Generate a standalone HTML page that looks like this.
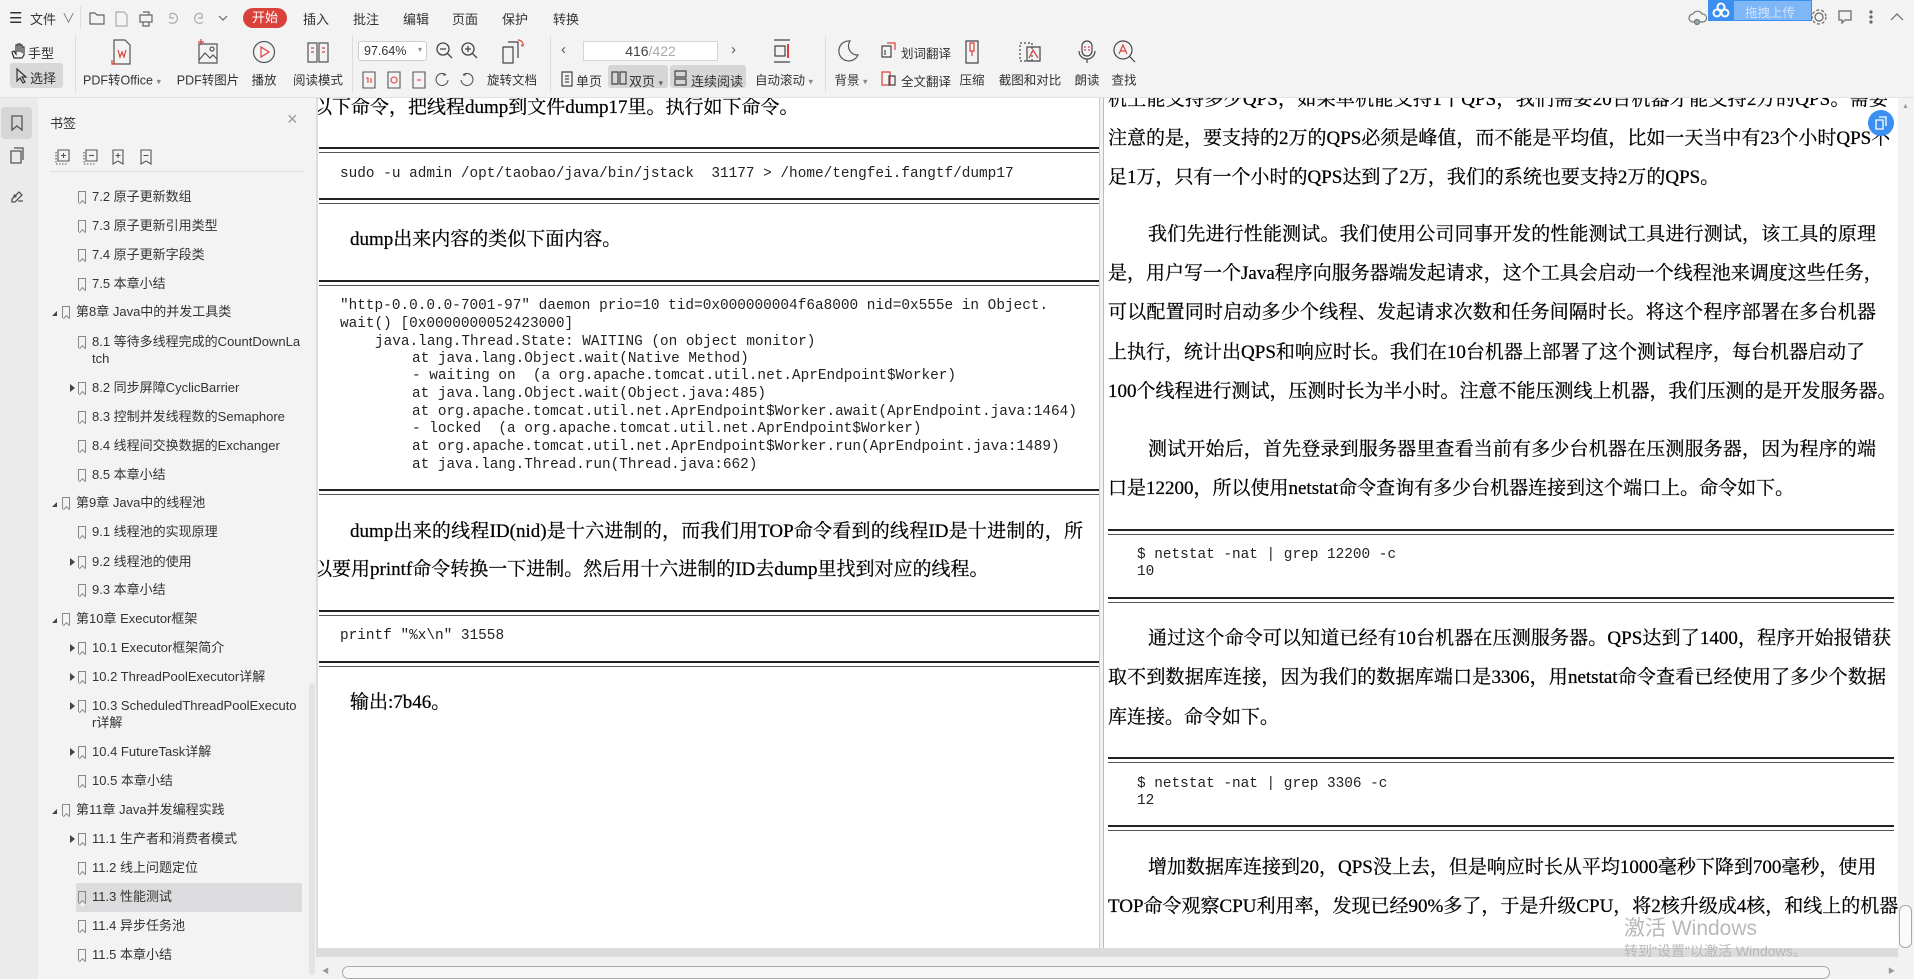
<!DOCTYPE html>
<html><head><meta charset="utf-8">
<style>
*{margin:0;padding:0;box-sizing:border-box}
body{width:1914px;height:979px;overflow:hidden;position:relative;background:#f3f3f3;font-family:"Liberation Sans","Noto Sans CJK SC",sans-serif;color:#333}
.a{position:absolute;white-space:nowrap}
.t{font-size:13px;color:#333}
.lbl{font-size:12.5px;color:#333;transform:translate(-50%,-50%)}
.ic{position:absolute}
.sep{position:absolute;width:1px;background:#ddd}
.pg{position:absolute;background:#fff;overflow:hidden}
.s{position:absolute;white-space:nowrap;font-family:"Liberation Serif","Noto Serif CJK SC",serif;font-size:19px;color:#000;line-height:24px;margin-top:-12px;-webkit-text-stroke:0.25px #000}
.j{text-align:justify;text-align-last:justify}
.m{position:absolute;white-space:pre;font-family:"Liberation Mono",monospace;font-size:14.4px;color:#222;line-height:17px;margin-top:-9px}
.r{position:absolute;height:6px;border-top:2px solid #222;border-bottom:1px solid #555}
.sb{position:absolute;font-size:13px;color:#333;white-space:nowrap;line-height:17px}
.bm{position:absolute;width:8px;height:12px;border:1.3px solid #888;border-bottom:none}
.bm:after{content:"";position:absolute;left:1px;bottom:-3px;width:4px;height:4px;border-left:1.3px solid #888;border-top:1.3px solid #888;transform:rotate(45deg);background:#f3f3f3}
.tri{position:absolute;width:0;height:0}
</style></head><body>

<!-- top row -->
<div class="a t" style="left:9px;top:9px;font-size:15px">☰</div>
<div class="a t" style="left:30px;top:9px">文件</div>
<div class="a t" style="left:62px;top:8px;color:#777">∨</div>
<div class="sep" style="left:80px;top:6px;height:22px"></div>
<svg class="ic" style="left:88px;top:9px" width="150" height="18" fill="none" stroke="#666" stroke-width="1.2">
<path d="M2 4h5l2 2h7v9H2z"/><path d="M28 3h8l3 3v11H28z" stroke="#aaa"/><path d="M52 6h12v7H52zM55 3h6v3M55 13h6v4h-6z"/><path d="M82 5a5 5 0 1 1-1 8M82 5v4h4" stroke="#aaa"/><path d="M114 5a5 5 0 1 0 1 8M114 5v4h-4" stroke="#aaa"/><path d="M131 7l4 4 4-4"/>
</svg>
<div class="a" style="left:243px;top:8px;width:44px;height:20px;background:#d9413b;border-radius:10px;color:#fff;font-size:13px;text-align:center;line-height:20px">开始</div>
<div class="a t" style="left:303px;top:9px">插入</div>
<div class="a t" style="left:353px;top:9px">批注</div>
<div class="a t" style="left:403px;top:9px">编辑</div>
<div class="a t" style="left:452px;top:9px">页面</div>
<div class="a t" style="left:502px;top:9px">保护</div>
<div class="a t" style="left:553px;top:9px">转换</div>
<svg class="ic" style="left:1688px;top:8px" width="20" height="18" fill="none" stroke="#777" stroke-width="1.2"><path d="M5 14a4 4 0 0 1 0-8 5 5 0 0 1 9 0 4 4 0 0 1 1 8z"/><circle cx="9" cy="14" r="2.5" fill="#9aa"/></svg>
<div class="a" style="left:1708px;top:0;width:104px;height:21px;background:#7fb6f5;border:1px solid #3b8ff0"></div>
<div class="a" style="left:1708px;top:0;width:26px;height:21px;background:#3b8ff0"></div>
<svg class="ic" style="left:1712px;top:2px" width="18" height="16" fill="none" stroke="#fff" stroke-width="2"><circle cx="9" cy="5" r="3.5"/><circle cx="5" cy="11" r="3.5"/><circle cx="13" cy="11" r="3.5"/></svg>
<div class="a" style="left:1745px;top:2px;font-size:12.5px;color:#cfe4ff">拖拽上传</div>
<svg class="ic" style="left:1810px;top:8px" width="100" height="18" fill="none" stroke="#666" stroke-width="1.2"><circle cx="9" cy="9" r="4"/><circle cx="9" cy="9" r="7" stroke-dasharray="3 2"/><path d="M29 3h12v9h-6l-3 3v-3h-3z"/><circle cx="61" cy="4" r="1" fill="#666"/><circle cx="61" cy="9" r="1" fill="#666"/><circle cx="61" cy="14" r="1" fill="#666"/><path d="M81 12l6-6 6 6"/></svg>

<!-- second row -->
<svg class="ic" style="left:10px;top:42px" width="16" height="18" fill="none" stroke="#333" stroke-width="1.2"><path d="M4 16l-2-6 2-1 2 3V3h2v7V2h2v8V3h2v8V5h2v8l-2 3z"/></svg>
<div class="a t" style="left:28px;top:43px">手型</div>
<div class="a" style="left:10px;top:63px;width:53px;height:25px;background:#d8d8d8;border-radius:3px"></div>
<svg class="ic" style="left:14px;top:67px" width="14" height="17" fill="none" stroke="#333" stroke-width="1.2"><path d="M3 2v12l3-3 3 5 2-1-3-5h4z"/></svg>
<div class="a t" style="left:30px;top:68px">选择</div>
<div class="sep" style="left:75px;top:36px;height:56px"></div>

<svg class="ic" style="left:110px;top:38px" width="24" height="28" fill="none" stroke="#555" stroke-width="1.2"><path d="M4 2h11l5 5v19H4z"/><path d="M8 12l2 7 2-5 2 5 2-7" stroke="#d9413b"/><path d="M2 22v4h5" stroke="#d9413b"/></svg>
<div class="a lbl" style="left:122px;top:79px">PDF转Office <span style="font-size:9px;color:#888">▾</span></div>
<svg class="ic" style="left:196px;top:38px" width="24" height="28" fill="none" stroke="#555" stroke-width="1.2"><path d="M3 6h18v19H3z"/><path d="M3 22l6-7 5 5 3-3 4 4"/><circle cx="16" cy="11" r="2"/><path d="M5 1v6M2 4h6" stroke="#d9413b"/></svg>
<div class="a lbl" style="left:208px;top:79px">PDF转图片</div>
<svg class="ic" style="left:252px;top:40px" width="24" height="24" fill="none" stroke="#555" stroke-width="1.2"><circle cx="12" cy="12" r="10.5"/><path d="M9 7v10l8-5z" stroke="#d9413b"/></svg>
<div class="a lbl" style="left:264px;top:79px">播放</div>
<svg class="ic" style="left:306px;top:40px" width="24" height="24" fill="none" stroke="#555" stroke-width="1.2"><path d="M2 3h9v19H2zM13 3h9v19h-9z"/><path d="M5 8h3M5 12h3M16 8h3M16 12h3" stroke="#d9413b"/></svg>
<div class="a lbl" style="left:318px;top:79px">阅读模式</div>
<div class="sep" style="left:352px;top:36px;height:56px"></div>

<div class="a" style="left:358px;top:41px;width:69px;height:20px;background:#fff;border:1px solid #ccc;border-radius:3px;font-size:12.5px;padding:2px 5px;color:#333">97.64%<span style="position:absolute;right:4px;top:3px;font-size:8px;color:#888">▾</span></div>
<svg class="ic" style="left:435px;top:41px" width="48" height="20" fill="none" stroke="#444" stroke-width="1.3"><circle cx="8" cy="8" r="6"/><path d="M12 12l5 5M5 8h6"/><circle cx="33" cy="8" r="6"/><path d="M37 12l5 5M30 8h6M33 5v6" /></svg>
<svg class="ic" style="left:361px;top:70px" width="118" height="20" fill="none" stroke="#555" stroke-width="1.1"><path d="M2 2h12v16H2z"/><path d="M5 8h2v5M10 8v5" stroke="#d9413b"/><path d="M27 2h12v16H27z"/><circle cx="33" cy="10" r="3" stroke="#d9413b"/><path d="M52 2h12v16H52z"/><path d="M56 10h4" stroke="#d9413b"/><path d="M85 5a6 6 0 1 0 2 5M85 5h-3"/><path d="M102 5a6 6 0 1 1-2 5M102 5h3"/></svg>
<svg class="ic" style="left:500px;top:38px" width="26" height="28" fill="none" stroke="#444" stroke-width="1.2"><path d="M3 9h10v16H3z"/><path d="M8 4h10v16" /><path d="M18 2a5 5 0 0 1 5 6l-2-1" stroke="#d9413b"/></svg>
<div class="a lbl" style="left:512px;top:79px">旋转文档</div>
<div class="sep" style="left:550px;top:36px;height:56px"></div>

<div class="a t" style="left:561px;top:41px;font-size:15px;color:#555">‹</div>
<div class="a" style="left:583px;top:41px;width:135px;height:20px;background:#fff;border:1px solid #cfd6e0;font-size:14px;text-align:center;line-height:18px;color:#444">416<span style="color:#aaa">/422</span></div>
<div class="a t" style="left:731px;top:41px;font-size:15px;color:#555">›</div>
<svg class="ic" style="left:560px;top:70px" width="14" height="18" fill="none" stroke="#444" stroke-width="1.2"><path d="M2 2h10v14H2zM5 6h4M5 9h4M5 12h4"/></svg>
<div class="a t" style="left:576px;top:71px">单页</div>
<div class="a" style="left:608px;top:65px;width:60px;height:23px;background:#d6d6d6;border-radius:3px"></div>
<svg class="ic" style="left:611px;top:70px" width="16" height="16" fill="none" stroke="#444" stroke-width="1.2"><path d="M1 2h6v12H1zM9 2h6v12H9z"/></svg>
<div class="a t" style="left:629px;top:71px">双页 <span style="font-size:9px;color:#666">▾</span></div>
<div class="a" style="left:670px;top:65px;width:76px;height:23px;background:#d6d6d6;border-radius:3px"></div>
<svg class="ic" style="left:673px;top:70px" width="16" height="16" fill="none" stroke="#444" stroke-width="1.2"><path d="M2 1h11v6H2zM2 9h11v6H2z"/></svg>
<div class="a t" style="left:691px;top:71px">连续阅读</div>
<svg class="ic" style="left:772px;top:38px" width="20" height="26" fill="none" stroke="#444" stroke-width="1.2"><path d="M2 2h16M2 24h16M3 8h10v10H3z"/><path d="M16 6v14" stroke="#d9413b" stroke-width="2"/></svg>
<div class="a lbl" style="left:784px;top:79px">自动滚动 <span style="font-size:9px;color:#888">▾</span></div>
<div class="sep" style="left:825px;top:36px;height:56px"></div>
<svg class="ic" style="left:836px;top:38px" width="24" height="26" fill="none" stroke="#555" stroke-width="1.2"><path d="M14 3a10 10 0 1 0 8 14A9 9 0 0 1 14 3z"/></svg>
<div class="a lbl" style="left:851px;top:79px">背景 <span style="font-size:9px;color:#888">▾</span></div>
<svg class="ic" style="left:880px;top:42px" width="16" height="16" fill="none" stroke="#444" stroke-width="1.2"><path d="M2 4h9v11H2z"/><path d="M7 1h8v7" stroke="#d9413b"/><path d="M5 8v5" /></svg>
<div class="a t" style="left:901px;top:43px;font-size:12.5px">划词翻译</div>
<svg class="ic" style="left:880px;top:70px" width="16" height="16" fill="none" stroke="#444" stroke-width="1.2"><path d="M2 2h8v13H2z" stroke="#d9413b"/><path d="M9 6h6v9H9z"/></svg>
<div class="a t" style="left:901px;top:71px;font-size:12.5px">全文翻译</div>
<svg class="ic" style="left:964px;top:39px" width="16" height="26" fill="none" stroke="#444" stroke-width="1.2"><path d="M2 2h12v22H2z"/><path d="M6 4h4v8H6zM8 12v5" stroke="#d9413b"/></svg>
<div class="a lbl" style="left:972px;top:79px">压缩</div>
<svg class="ic" style="left:1018px;top:39px" width="24" height="26" fill="none" stroke="#444" stroke-width="1.2"><path d="M2 4h12v18H2z" stroke-dasharray="2 2"/><path d="M9 8h13v14H9z"/><path d="M11 19l4-8 5 8" stroke="#d9413b"/></svg>
<div class="a lbl" style="left:1030px;top:79px">截图和对比</div>
<svg class="ic" style="left:1077px;top:39px" width="20" height="26" fill="none" stroke="#444" stroke-width="1.2"><rect x="5" y="2" width="10" height="15" rx="5"/><path d="M2 12a8 8 0 0 0 16 0M10 20v4"/><path d="M7 8h2M11 8h2M7 11h2M11 11h2" stroke="#d9413b"/></svg>
<div class="a lbl" style="left:1087px;top:79px">朗读</div>
<svg class="ic" style="left:1112px;top:39px" width="26" height="26" fill="none" stroke="#444" stroke-width="1.2"><circle cx="11" cy="11" r="9"/><path d="M17 17l6 6"/><path d="M7 15l4-9 4 9M8 12h6" stroke="#d9413b"/></svg>
<div class="a lbl" style="left:1124px;top:79px">查找</div>
<div class="a" style="left:0;top:97px;width:1914px;height:1px;background:#e2e2e2"></div>

<!-- left strip -->
<div class="a" style="left:0;top:98px;width:38px;height:881px;background:#ebebeb"></div>
<div class="a" style="left:1px;top:107px;width:31px;height:32px;background:#d6d6d6;border-radius:4px"></div>
<svg class="ic" style="left:9px;top:115px" width="16" height="96" fill="none" stroke="#555" stroke-width="1.3"><path d="M3 1h10v14l-5-4-5 4z"/><path d="M2 36h10v12H2zM5 33h9v12"/><path d="M3 84l7-7 3 3-7 7H3zM9 86h5"/><circle cx="6" cy="81" r="1"/></svg>

<!-- bookmark panel -->
<div class="a t" style="left:50px;top:113px">书签</div>
<div class="a" style="left:287px;top:109px;font-size:18px;color:#999">×</div>
<svg class="ic" style="left:55px;top:148px" width="100" height="18" fill="none" stroke="#555" stroke-width="1.1"><path d="M3 2h11v11H3z"/><path d="M1 4v12h12" stroke-dasharray="1.5 1.5"/><path d="M8.5 5v5M6 7.5h5"/><path d="M31 2h11v11H31z"/><path d="M29 4v12h12" stroke-dasharray="1.5 1.5"/><path d="M34 7.5h5"/><path d="M58 2h10v14l-5-3-5 3z"/><path d="M63 5v5M60.5 7.5h5"/><path d="M86 2h10v14l-5-3-5 3z"/><path d="M88.5 7.5h5"/></svg>
<div class="a" style="left:50px;top:171px;width:255px;height:1px;background:#dedede"></div>
<div class="a" style="left:309px;top:683px;width:6px;height:292px;background:#e3e3e3;border-radius:3px"></div>
<div class="a" style="left:76px;top:883px;width:226px;height:29px;background:#dcdcde;border-radius:2px"></div>

<div id="sb"></div>

<!-- page area -->
<div class="a" style="left:316px;top:98px;width:1598px;height:881px;background:#dcdcdc"></div>
<div class="pg" style="left:318px;top:98px;width:781px;height:850px">
</div>
<div class="pg" style="left:1103px;top:98px;width:795px;height:850px;border-left:1px solid #bbb"></div>
<div class="a" style="left:1099px;top:98px;width:4px;height:850px;background:#f2f2f2;border-left:1px solid #ccc"></div>

<!-- left page text -->
<div style="position:absolute;left:0;top:0;width:1099px;height:948px;overflow:hidden;clip-path:inset(98px 0 0 318px)">
<div class="s" style="left:313px;top:108px">以下命令，把线程dump到文件dump17里。执行如下命令。</div>
<div class="r" style="left:319px;top:147px;width:780px"></div>
<div class="m" style="left:340px;top:175px">sudo -u admin /opt/taobao/java/bin/jstack  31177 &gt; /home/tengfei.fangtf/dump17</div>
<div class="r" style="left:319px;top:198px;width:780px"></div>
<div class="s" style="left:350px;top:240px">dump出来内容的类似下面内容。</div>
<div class="r" style="left:319px;top:280px;width:780px"></div>
<div class="m" style="left:340px;top:307px">"http-0.0.0.0-7001-97" daemon prio=10 tid=0x000000004f6a8000 nid=0x555e in Object.</div>
<div class="m" style="left:340px;top:325px">wait() [0x0000000052423000]</div>
<div class="m" style="left:375px;top:343px">java.lang.Thread.State: WAITING (on object monitor)</div>
<div class="m" style="left:412px;top:360px">at java.lang.Object.wait(Native Method)</div>
<div class="m" style="left:412px;top:377px">- waiting on  (a org.apache.tomcat.util.net.AprEndpoint$Worker)</div>
<div class="m" style="left:412px;top:395px">at java.lang.Object.wait(Object.java:485)</div>
<div class="m" style="left:412px;top:413px">at org.apache.tomcat.util.net.AprEndpoint$Worker.await(AprEndpoint.java:1464)</div>
<div class="m" style="left:412px;top:430px">- locked  (a org.apache.tomcat.util.net.AprEndpoint$Worker)</div>
<div class="m" style="left:412px;top:448px">at org.apache.tomcat.util.net.AprEndpoint$Worker.run(AprEndpoint.java:1489)</div>
<div class="m" style="left:412px;top:466px">at java.lang.Thread.run(Thread.java:662)</div>
<div class="r" style="left:319px;top:489px;width:780px"></div>
<div class="s j" style="left:350px;top:532px;width:733px">dump出来的线程ID(nid)是十六进制的，而我们用TOP命令看到的线程ID是十进制的，所</div>
<div class="s j" style="left:313px;top:570px;width:672px">以要用printf命令转换一下进制。然后用十六进制的ID去dump里找到对应的线程。</div>
<div class="r" style="left:319px;top:610px;width:780px"></div>
<div class="m" style="left:340px;top:637px">printf "%x\n" 31558</div>
<div class="r" style="left:319px;top:661px;width:780px"></div>
<div class="s" style="left:350px;top:703px">输出:7b46。</div>
</div>

<!-- right page text -->
<div style="position:absolute;left:0;top:0;width:1898px;height:948px;overflow:hidden;clip-path:inset(98px 0 0 1103px)">
<div class="s j" style="left:1108px;top:100px;width:780px">机上能支持多少QPS，如果单机能支持1千QPS，我们需要20台机器才能支持2万的QPS。需要</div>
<div class="s j" style="left:1108px;top:139px;width:782px">注意的是，要支持的2万的QPS必须是峰值，而不能是平均值，比如一天当中有23个小时QPS不</div>
<div class="s" style="left:1108px;top:178px">足1万，只有一个小时的QPS达到了2万，我们的系统也要支持2万的QPS。</div>
<div class="s j" style="left:1148px;top:235px;width:728px">我们先进行性能测试。我们使用公司同事开发的性能测试工具进行测试，该工具的原理</div>
<div class="s j" style="left:1108px;top:274px;width:770px">是，用户写一个Java程序向服务器端发起请求，这个工具会启动一个线程池来调度这些任务，</div>
<div class="s j" style="left:1108px;top:313px;width:768px">可以配置同时启动多少个线程、发起请求次数和任务间隔时长。将这个程序部署在多台机器</div>
<div class="s j" style="left:1108px;top:353px;width:757px">上执行，统计出QPS和响应时长。我们在10台机器上部署了这个测试程序，每台机器启动了</div>
<div class="s j" style="left:1108px;top:392px;width:783px">100个线程进行测试，压测时长为半小时。注意不能压测线上机器，我们压测的是开发服务器。</div>
<div class="s j" style="left:1148px;top:450px;width:728px">测试开始后，首先登录到服务器里查看当前有多少台机器在压测服务器，因为程序的端</div>
<div class="s j" style="left:1108px;top:489px;width:680px">口是12200，所以使用netstat命令查询有多少台机器连接到这个端口上。命令如下。</div>
<div class="r" style="left:1108px;top:529px;width:786px"></div>
<div class="m" style="left:1137px;top:556px">$ netstat -nat | grep 12200 -c</div>
<div class="m" style="left:1137px;top:573px">10</div>
<div class="r" style="left:1108px;top:597px;width:786px"></div>
<div class="s j" style="left:1148px;top:639px;width:743px">通过这个命令可以知道已经有10台机器在压测服务器。QPS达到了1400，程序开始报错获</div>
<div class="s j" style="left:1108px;top:678px;width:778px">取不到数据库连接，因为我们的数据库端口是3306，用netstat命令查看已经使用了多少个数据</div>
<div class="s" style="left:1108px;top:718px">库连接。命令如下。</div>
<div class="r" style="left:1108px;top:757px;width:786px"></div>
<div class="m" style="left:1137px;top:785px">$ netstat -nat | grep 3306 -c</div>
<div class="m" style="left:1137px;top:802px">12</div>
<div class="r" style="left:1108px;top:825px;width:786px"></div>
<div class="s j" style="left:1148px;top:868px;width:728px">增加数据库连接到20，QPS没上去，但是响应时长从平均1000毫秒下降到700毫秒，使用</div>
<div class="s j" style="left:1108px;top:907px;width:783px">TOP命令观察CPU利用率，发现已经90%多了，于是升级CPU，将2核升级成4核，和线上的机器</div>
</div>

<div class="a" style="left:1624px;top:912px;font-size:21px;color:#b8b8b8">激活 Windows</div>
<div class="a" style="left:1624px;top:941px;font-size:14px;color:#b8b8b8">转到"设置"以激活 Windows。</div>

<!-- blue floating icon -->
<div class="a" style="left:1868px;top:110px;width:26px;height:26px;border-radius:50%;background:#3b8ff0"></div>
<svg class="ic" style="left:1873px;top:115px" width="16" height="16" fill="none" stroke="#fff" stroke-width="1.3"><path d="M3 5h7v9H3zM6 2h7v9"/></svg>

<!-- scrollbars -->
<div class="a" style="left:1898px;top:98px;width:16px;height:881px;background:#f2f2f2"></div>
<div class="a" style="left:1902px;top:103px;font-size:7px;color:#999">▲</div>
<div class="a" style="left:1899px;top:905px;width:13px;height:43px;border:1px solid #aaa;border-radius:6px;background:#fafafa"></div>
<div class="a" style="left:316px;top:957px;width:1582px;height:22px;background:#f2f2f2"></div>
<div class="a" style="left:322px;top:966px;font-size:7px;color:#999">◀</div>
<div class="a" style="left:342px;top:966px;width:1488px;height:13px;border:1px solid #aaa;border-radius:7px;background:#f7f7f7"></div>
<div class="a" style="left:1888px;top:966px;font-size:7px;color:#999">▶</div>

<script>
var items=[
[2,"7.2 原子更新数组",197],[2,"7.3 原子更新引用类型",226],[2,"7.4 原子更新字段类",255],[2,"7.5 本章小结",284],
[1,"第8章 Java中的并发工具类",312,"e"],[2,"8.1 等待多线程完成的CountDownLa<br>tch",342],[2,"8.2 同步屏障CyclicBarrier",388,"c"],
[2,"8.3 控制并发线程数的Semaphore",417],[2,"8.4 线程间交换数据的Exchanger",446],[2,"8.5 本章小结",475],
[1,"第9章 Java中的线程池",503,"e"],[2,"9.1 线程池的实现原理",532],[2,"9.2 线程池的使用",562,"c"],[2,"9.3 本章小结",590],
[1,"第10章 Executor框架",619,"e"],[2,"10.1 Executor框架简介",648,"c"],[2,"10.2 ThreadPoolExecutor详解",677,"c"],
[2,"10.3 ScheduledThreadPoolExecuto<br>r详解",706,"c"],[2,"10.4 FutureTask详解",752,"c"],[2,"10.5 本章小结",781],
[1,"第11章 Java并发编程实践",810,"e"],[2,"11.1 生产者和消费者模式",839,"c"],[2,"11.2 线上问题定位",868],[2,"11.3 性能测试",897],
[2,"11.4 异步任务池",926],[2,"11.5 本章小结",955]];
var h="";
items.forEach(function(it){
 var tx=it[0]==1?76:92, bx=it[0]==1?62:78, ax=it[0]==1?52:70, y=it[2];
 h+='<div class="bm" style="left:'+bx+'px;top:'+(y-6)+'px"></div>';
 h+='<div class="sb" style="left:'+tx+'px;top:'+(y-9)+'px">'+it[1]+'</div>';
 if(it[3]=="e")h+='<div class="tri" style="left:'+ax+'px;top:'+(y-1)+'px;border-left:5px solid transparent;border-bottom:5px solid #444"></div>';
 if(it[3]=="c")h+='<div class="tri" style="left:'+ax+'px;top:'+(y-4)+'px;border-top:4px solid transparent;border-bottom:4px solid transparent;border-left:5px solid #444"></div>';
});
document.getElementById("sb").innerHTML=h;
</script>
</body></html>
